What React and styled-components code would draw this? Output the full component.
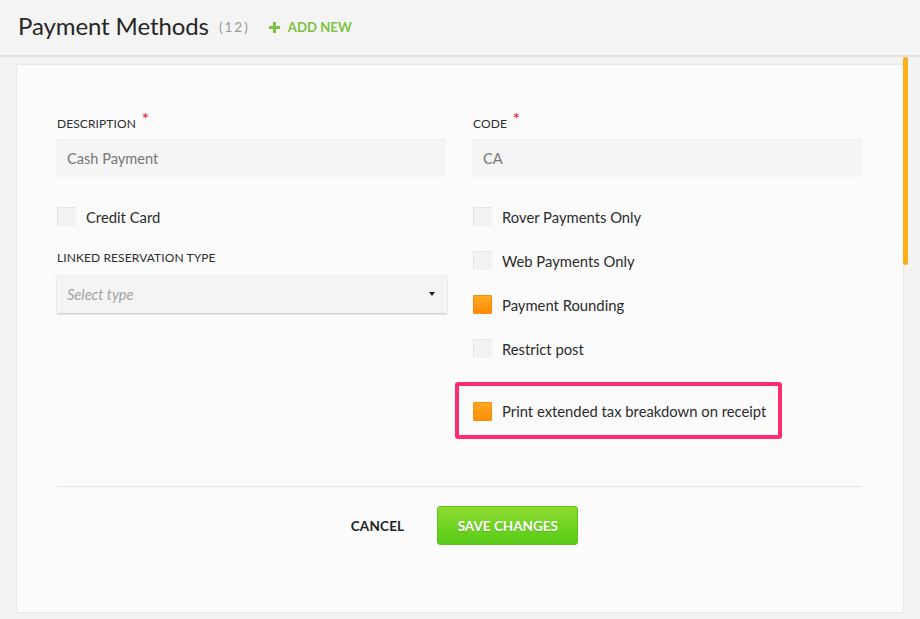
import React from "react";
import styled, { createGlobalStyle } from "styled-components";

const Global = createGlobalStyle`
  html, body { margin: 0; padding: 0; }
  body {
    background: #f3f3f3;
    font-family: Lato, "Open Sans", Arial, sans-serif;
    color: #333;
    width: 920px;
    height: 619px;
    overflow: hidden;
  }
  * { box-sizing: border-box; }
`;

const Page = styled.div`
  width: 920px;
  height: 619px;
  position: relative;
  display: flex;
  flex-direction: column;
`;

const Header = styled.header`
  height: 57px;
  flex: none;
  display: flex;
  align-items: center;
  padding: 0 0 4px 18px;
  border-bottom: 2px solid #e2e2e2;
  background: #f4f4f4;
`;

const Title = styled.h1`
  margin: 0;
  font-size: 24px;
  font-weight: 400;
  color: #262626;
  letter-spacing: -0.1px;
`;

const Count = styled.span`
  margin-left: 10px;
  font-size: 13.5px;
  color: #9a9a9a;
  letter-spacing: 2px;
  margin-top: 2px;
`;

const AddNew = styled.button`
  margin-left: 19px;
  margin-top: 3px;
  border: 0;
  background: none;
  padding: 0;
  display: flex;
  align-items: center;
  gap: 8px;
  font-family: inherit;
  font-size: 13.2px;
  font-weight: 700;
  color: #7cc242;
  letter-spacing: 0;
  cursor: pointer;
`;

const Body = styled.main`
  flex: 1;
  padding: 8px 17px 7px 17px;
  display: flex;
`;

const Panel = styled.section`
  flex: 1;
  background: #fbfbfb;
  box-shadow: 0 0 2px rgba(0, 0, 0, 0.12);
  padding: 49px 41px 0 40px;
  display: flex;
  flex-direction: column;
`;

const Scrollbar = styled.div`
  position: absolute;
  left: 903px;
  top: 57px;
  width: 5px;
  height: 208px;
  border-radius: 2px;
  background: #fbb017;
`;

const Grid = styled.div`
  display: grid;
  grid-template-columns: 388px 389px;
  column-gap: 28px;
  align-items: start;
`;

const Column = styled.div`
  display: flex;
  flex-direction: column;
`;

const Label = styled.label`
  display: block;
  font-size: 12px;
  color: #2e2e2e;
  letter-spacing: 0.1px;
  line-height: 16px;
  height: 16px;
  margin-top: ${(p) => p.$mt || 0}px;
  margin-bottom: 9px;
`;

const Star = styled.span`
  color: #e8383d;
  font-size: 16px;
  font-weight: 700;
  margin-left: 6px;
  position: relative;
  top: -4px;
`;

const Input = styled.div`
  height: 38px;
  background: #f5f5f5;
  border-top: 1px solid #ececec;
  border-left: 1px solid #f0f0f0;
  display: flex;
  align-items: center;
  padding-left: 9px;
  font-size: 14.6px;
  color: #777;
`;

const Select = styled.div`
  height: 38px;
  width: 390px;
  background: #f4f4f4;
  box-shadow: 0 1px 2px rgba(0, 0, 0, 0.22);
  display: flex;
  align-items: center;
  justify-content: space-between;
  padding: 0 12px 0 10px;
  font-size: 14.6px;
  font-style: italic;
  color: #a3a3a3;
`;

const Caret = styled.span`
  width: 0;
  height: 0;
  border-left: 3px solid transparent;
  border-right: 3px solid transparent;
  border-top: 4px solid #222;
`;

const CheckRow = styled.div`
  display: flex;
  align-items: center;
  gap: 10px;
  height: 19px;
  margin-top: ${(p) => p.$mt || 0}px;
  font-size: 14.8px;
  color: #2b2b2b;
`;

const Box = styled.span`
  width: 19px;
  height: 19px;
  flex: none;
  border-radius: 1px;
  ${(p) =>
    p.$checked
      ? `
    background: linear-gradient(#ffa824, #ff8c05);
    border: 1px solid #f0900e;
  `
      : `
    background: #f3f3f3;
    border-top: 1px solid #e6e6e6;
    border-left: 1px solid #e3e3e3;
  `}
`;

const Highlight = styled.div`
  margin: 24px 0 0 -18px;
  width: 327px;
  height: 57px;
  border: 4px solid #ff2d6f;
  border-radius: 3px;
  display: flex;
  align-items: center;
  padding-left: 14px;
  padding-top: 1px;
`;

const Divider = styled.hr`
  margin: 47px 0 0 0;
  border: 0;
  border-top: 1px solid #e3e3e3;
  width: 805px;
`;

const Actions = styled.div`
  display: flex;
  justify-content: center;
  align-items: center;
  gap: 33px;
  margin-top: 19px;
  padding-left: 10px;
`;

const Cancel = styled.button`
  border: 0;
  background: none;
  padding: 0;
  font-family: inherit;
  font-size: 13.5px;
  font-weight: 700;
  color: #222;
  letter-spacing: 0.2px;
`;

const Save = styled.button`
  width: 141px;
  height: 39px;
  border: 1px solid #5cc41c;
  border-radius: 3px;
  background: linear-gradient(#8ddc2f, #57cb18);
  color: #fff;
  font-family: inherit;
  font-size: 13.5px;
  font-weight: 700;
  letter-spacing: 0;
  text-shadow: 0 1px 1px rgba(0, 0, 0, 0.15);
`;

const Plus = () => (
  <svg width="11" height="11" viewBox="0 0 11 11">
    <rect x="4" y="0" width="3" height="11" fill="#7cc242" />
    <rect x="0" y="4" width="11" height="3" fill="#7cc242" />
  </svg>
);

export default function App() {
  return (
    <Page>
      <Global />
      <Header>
        <Title>Payment Methods</Title>
        <Count>(12)</Count>
        <AddNew>
          <Plus />
          ADD NEW
        </AddNew>
      </Header>
      <Body>
        <Panel>
          <Grid>
            <Column>
              <Label>
                DESCRIPTION<Star>*</Star>
              </Label>
              <Input>Cash Payment</Input>
              <CheckRow $mt={30}>
                <Box />
                Credit Card
              </CheckRow>
              <Label $mt={24}>LINKED RESERVATION TYPE</Label>
              <Select>
                Select type
                <Caret />
              </Select>
            </Column>
            <Column>
              <Label>
                CODE<Star>*</Star>
              </Label>
              <Input>CA</Input>
              <CheckRow $mt={30}>
                <Box />
                Rover Payments Only
              </CheckRow>
              <CheckRow $mt={25}>
                <Box />
                Web Payments Only
              </CheckRow>
              <CheckRow $mt={25}>
                <Box $checked />
                Payment Rounding
              </CheckRow>
              <CheckRow $mt={25}>
                <Box />
                Restrict post
              </CheckRow>
              <Highlight>
                <CheckRow>
                  <Box $checked />
                  Print extended tax breakdown on receipt
                </CheckRow>
              </Highlight>
            </Column>
          </Grid>
          <Divider />
          <Actions>
            <Cancel>CANCEL</Cancel>
            <Save>SAVE CHANGES</Save>
          </Actions>
        </Panel>
      </Body>
      <Scrollbar />
    </Page>
  );
}
